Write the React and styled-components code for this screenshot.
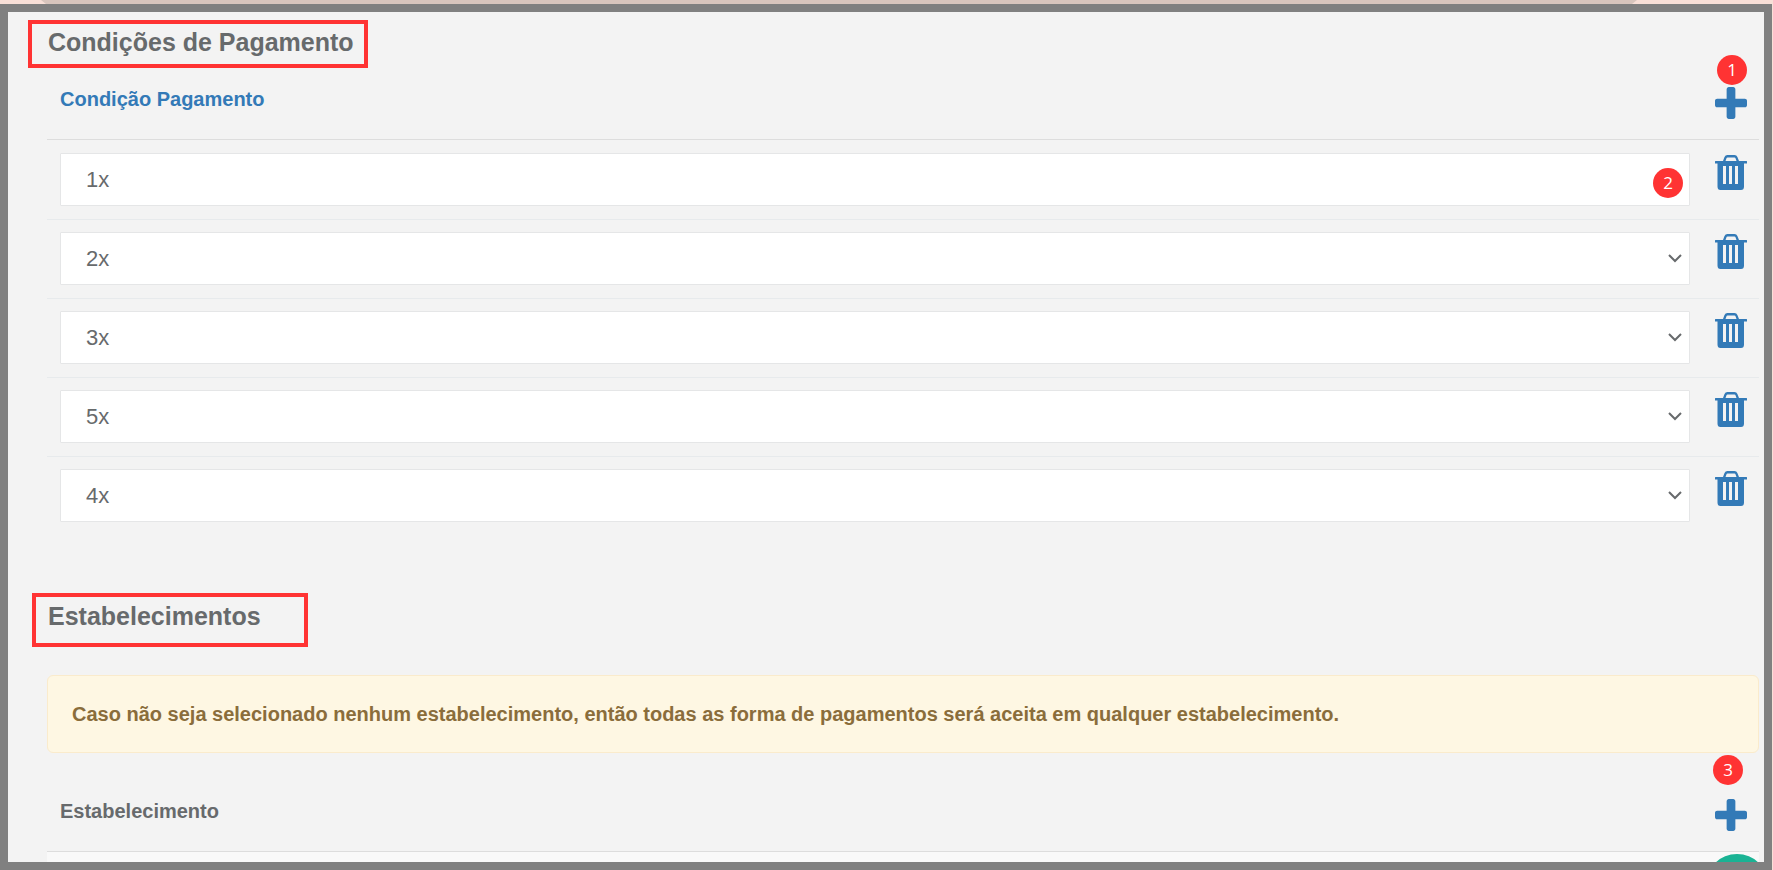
import React, { useState } from "react";
import styled, { createGlobalStyle } from "styled-components";

const GlobalStyle = createGlobalStyle`
	* {
		box-sizing: border-box;
	}

	body {
		margin: 0;
		background: #f8dfd7;
		color: #676a6c;
		font-family: "Liberation Sans", Arial, sans-serif;
		font-size: 20px;
		line-height: 28px;
	}
`;

// --- Styled Components ---
const Page = styled.div`
	display: flex;
	flex-direction: column;
	height: 100vh;
	padding-right: 1px;
	overflow: hidden;
`;

const Backdrop = styled.div`
	flex: none;
	height: 4px;
	margin: 0 135px 0 41px;
	background: #d8c5bd;
	clip-path: polygon(0 0, 100% 0, calc(100% - 5px) 100%, 5px 100%);
`;

const Modal = styled.main`
	position: relative;
	flex: 1;
	min-height: 0;
	padding: 8px 5px 0 20px;
	overflow: hidden;
	background: #f3f3f3;
	border: 8px solid #808080;
`;

const Section = styled.section`
	padding-left: 19px;
	margin-bottom: 58px;
`;

const Title = styled.h3`
	width: fit-content;
	margin: 0 0 ${({ $gap }) => $gap}px ${({ $left }) => -$left - 4}px;
	padding-top: ${({ $top }) => $top}px;
	padding-right: ${({ $right }) => $right}px;
	padding-bottom: ${({ $bottom }) => $bottom}px;
	padding-left: ${({ $left }) => $left + 1}px;
	border: 4px solid #ff3333;
	font-size: 25px;
	line-height: 28px;
	font-weight: 700;
`;

const Table = styled.table`
	width: 100%;
	border-collapse: separate;
	border-spacing: 0;
`;

const HeadCell = styled.th`
	height: 66px;
	padding: 11px 13px 0;
	border-bottom: 1px solid #dddddd;
	color: ${({ $link }) => ($link ? "#337ab7" : "inherit")};
	font-weight: 700;
	text-align: left;
	vertical-align: top;
`;

const IconHeadCell = styled(HeadCell)`
	position: relative;
	width: 56px;
	padding: 13px 12px 0;
`;

const Cell = styled.td`
	padding: 12px 13px 13px;
	border-top: 1px solid #e7eaec;
	vertical-align: top;

	tr:first-child > & {
		border-top-color: transparent;
	}
`;

const IconCell = styled(Cell)`
	width: 56px;
	padding: 14px 12px 0;
`;

const EmptyCell = styled.td`
	height: 53px;
	background: #f9f9f9;
`;

const SelectWrap = styled.div`
	position: relative;
`;

const Select = styled.select`
	display: block;
	width: 100%;
	height: 53px;
	padding: 0 25px;
	appearance: none;
	background: #ffffff;
	border: 1px solid #e5e6e7;
	border-radius: 1px;
	color: inherit;
	font-family: inherit;
	font-size: 22px;
`;

const Chevron = styled.svg`
	position: absolute;
	top: 21px;
	right: 7px;
	width: 16px;
	height: 11px;
	pointer-events: none;
`;

const IconButton = styled.button`
	display: block;
	padding: 0;
	background: none;
	border: 0;
	color: #337ab7;
	cursor: pointer;

	svg {
		display: block;
		fill: currentColor;
	}
`;

const Badge = styled.span`
	position: absolute;
	top: ${({ $top }) => $top}px;
	right: ${({ $right }) => $right}px;
	width: 30px;
	height: 30px;
	border-radius: 50%;
	background: #ff3333;
	color: #ffffff;
	font-family: "Open Sans", sans-serif;
	font-size: 17px;
	font-weight: 400;
	line-height: 29px;
	text-align: center;
`;

const Alert = styled.div`
	margin-bottom: 33px;
	padding: 24px;
	background: #fef7e3;
	border: 1px solid #faebcc;
	border-radius: 6px;
	color: #8a6d3b;
	font-weight: 700;
`;

const ChatButton = styled.button`
	position: absolute;
	right: -4px;
	bottom: -54px;
	width: 62px;
	height: 62px;
	border: 0;
	border-radius: 50%;
	background: #1ab394;
`;

const PlusIcon = () => (
	<svg width="32" height="32" viewBox="192 128 1408 1408" aria-hidden="true">
		<path d="M1600 736v192q0 40-28 68t-68 28h-416v416q0 40-28 68t-68 28h-192q-40 0-68-28t-28-68v-416h-416q-40 0-68-28t-28-68v-192q0-40 28-68t68-28h416v-416q0-40 28-68t68-28h192q40 0 68 28t28 68v416h416q40 0 68 28t28 68z" />
	</svg>
);

const TrashIcon = () => (
	<svg width="32" height="35" viewBox="0 0 32 35" aria-hidden="true">
		<path
			fillRule="evenodd"
			d="M8 6L9.500 2Q10.300 0 12.500 0H19.500Q21.600 0 22.400 2L24 6H31.500Q32 6 32 6.500V8.500H29V31.500Q29 35 26 35H5.500Q2.500 35 2.500 31.500V8.500H0V6.500Q0 6 .500 6ZM10.500 6H21.500L20.500 3.200Q20.200 2.500 19.500 2.500H12.500Q11.800 2.500 11.500 3.200ZM8 11V29H11V11ZM14 11V29H17V11ZM20 11V29H23V11Z"
		/>
	</svg>
);

const OPTIONS = ["1x", "2x", "3x", "4x", "5x"];

const App = () => {
	const [conditions, setConditions] = useState(["1x", "2x", "3x", "5x", "4x"]);

	const addCondition = () => setConditions([...conditions, "1x"]);
	const removeCondition = (index) =>
		setConditions(conditions.filter((_, i) => i !== index));
	const changeCondition = (index, value) =>
		setConditions(conditions.map((item, i) => (i === index ? value : item)));

	return (
		<Page>
			<GlobalStyle />
			<Backdrop />
			<Modal>
				<Section>
					<Title $left={15} $right={10} $top={4} $bottom={8} $gap={6}>
						Condições de Pagamento
					</Title>
					<Table>
						<thead>
							<tr>
								<HeadCell $link>Condição Pagamento</HeadCell>
								<IconHeadCell>
									<Badge $top={-19} $right={12}>
										1
									</Badge>
									<IconButton aria-label="Adicionar condição" onClick={addCondition}>
										<PlusIcon />
									</IconButton>
								</IconHeadCell>
							</tr>
						</thead>
						<tbody>
							{conditions.map((condition, index) => (
								<tr key={index}>
									<Cell>
										<SelectWrap>
											<Select
												aria-label="Condição Pagamento"
												value={condition}
												onChange={(e) => changeCondition(index, e.target.value)}
											>
												{OPTIONS.map((option) => (
													<option key={option}>{option}</option>
												))}
											</Select>
											{index === 0 ? (
												<Badge $top={15} $right={7}>
													2
												</Badge>
											) : (
												<Chevron viewBox="0 0 16 11">
													<path
														d="M2 2l6 6l6 -6"
														fill="none"
														stroke="#676a6c"
														strokeWidth="2"
													/>
												</Chevron>
											)}
										</SelectWrap>
									</Cell>
									<IconCell>
										<IconButton
											aria-label="Remover condição"
											onClick={() => removeCondition(index)}
										>
											<TrashIcon />
										</IconButton>
									</IconCell>
								</tr>
							))}
						</tbody>
					</Table>
				</Section>

				<Section>
					<Title $left={11} $right={43} $top={5} $bottom={13} $gap={28}>
						Estabelecimentos
					</Title>
					<Alert role="alert">
						Caso não seja selecionado nenhum estabelecimento, então todas as
						forma de pagamentos será aceita em qualquer estabelecimento.
					</Alert>
					<Table>
						<thead>
							<tr>
								<HeadCell>Estabelecimento</HeadCell>
								<IconHeadCell>
									<Badge $top={-31} $right={16}>
										3
									</Badge>
									<IconButton aria-label="Adicionar estabelecimento">
										<PlusIcon />
									</IconButton>
								</IconHeadCell>
							</tr>
						</thead>
						<tbody>
							<tr>
								<EmptyCell colSpan={2} />
							</tr>
						</tbody>
					</Table>
				</Section>
				<ChatButton aria-label="Abrir chat" />
			</Modal>
		</Page>
	);
};

export default App;
